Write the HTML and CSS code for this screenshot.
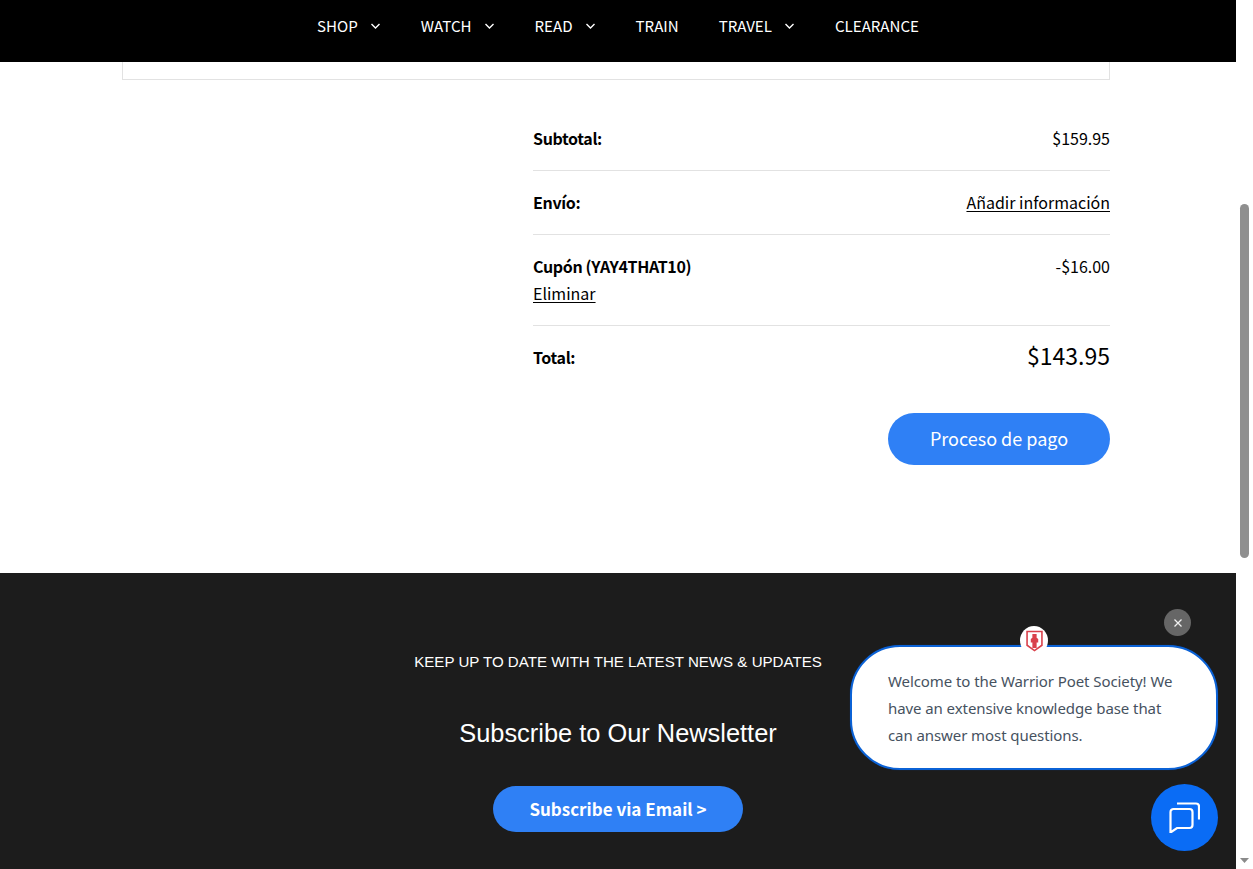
FILE: index.html
```html
<!DOCTYPE html>
<html lang="es">
<head>
<meta charset="utf-8">
<title>Carrito</title>
<link rel="stylesheet" href="styles.css">
</head>
<body>
<div class="viewport">
  <div class="page">
    <header class="topbar">
      <nav class="nav">
        <a class="nav-item">SHOP <svg class="chev" viewBox="0 0 10 6"><path d="M1 1l4 4 4-4"/></svg></a>
        <a class="nav-item">WATCH <svg class="chev" viewBox="0 0 10 6"><path d="M1 1l4 4 4-4"/></svg></a>
        <a class="nav-item">READ <svg class="chev" viewBox="0 0 10 6"><path d="M1 1l4 4 4-4"/></svg></a>
        <a class="nav-item">TRAIN</a>
        <a class="nav-item">TRAVEL <svg class="chev" viewBox="0 0 10 6"><path d="M1 1l4 4 4-4"/></svg></a>
        <a class="nav-item">CLEARANCE</a>
      </nav>
    </header>
    <main class="content">
      <div class="cart-box"></div>
      <section class="summary">
        <div class="row"><strong>Subtotal:</strong><span>$159.95</span></div>
        <div class="row"><strong>Envío:</strong><a class="link">Añadir información</a></div>
        <div class="row">
          <div class="coupon"><strong>Cupón (YAY4THAT10)</strong><a class="link">Eliminar</a></div>
          <span>-$16.00</span>
        </div>
        <div class="row row-total"><strong>Total:</strong><span class="total">$143.95</span></div>
        <div class="actions"><a class="checkout">Proceso de pago</a></div>
      </section>
    </main>
    <footer class="footer">
      <p class="kicker">KEEP UP TO DATE WITH THE LATEST NEWS &amp; UPDATES</p>
      <h2 class="news-title">Subscribe to Our Newsletter</h2>
      <a class="subscribe">Subscribe via Email &gt;</a>
    </footer>
  </div>
  <div class="scrollbar">
    <svg class="arrow" viewBox="0 0 17 17"><path d="M4 6h9l-4.500 5z" /></svg>
    <div class="thumb"></div>
    <svg class="arrow arrow-down" viewBox="0 0 17 17"><path d="M4 6h9l-4.500 5z" /></svg>
  </div>
  <button class="chat-close" aria-label="Cerrar">
    <svg viewBox="0 0 10 10"><path d="M1.500 1.500l7 7M8.500 1.500l-7 7"/></svg>
  </button>
  <div class="bubble">
    <span class="badge">
      <svg viewBox="0 0 16 20"><path class="shield" d="M1 1h14v13l-7 5-7-5z"/><path class="mark" d="M6 3.500h4V7l1.500 1v3.500H10v5H6v-5H4.500V8L6 7z"/></svg>
    </span>
    Welcome to the Warrior Poet Society! We have an extensive knowledge base that can answer most questions.
  </div>
  <button class="chat-launcher" aria-label="Chat">
    <svg viewBox="0 0 31 31"><path d="M1.500 10a3 3 0 0 1 3-3h16a3 3 0 0 1 3 3v13a3 3 0 0 1-3 3H8l-6.500 4.500z"/><path d="M8 1.500h19a3 3 0 0 1 3 3v13"/></svg>
  </button>
</div>
</body>
</html>
```
FILE: styles.css
```css
* { box-sizing: border-box; }
html, body { margin: 0; height: 100%; overflow: hidden; }
body {
  font-family: "Noto Sans CJK SC", "Noto Sans", sans-serif;
  font-size: 16px;
  line-height: 27px;
  color: #000;
  background: #fff;
}
.viewport { position: relative; display: flex; width: 1253px; height: 869px; overflow: hidden; }
.page { width: 1236px; flex: none; display: flex; flex-direction: column; }

.topbar { height: 62px; background: #000; flex: none; }
.nav { display: flex; justify-content: center; gap: 40px; padding: 12px 0 0 0; }
.nav-item { display: flex; align-items: center; gap: 12px; color: #fff; font-size: 15.100px; line-height: 27px; white-space: nowrap; }
.chev { width: 11px; height: 6px; fill: none; stroke: #fff; stroke-width: 1.400; }

.content { flex: 1; padding: 0 126px 0 122px; }
.cart-box { height: 18px; border: 1px solid #e2e2e2; border-top: 0; }
.summary { margin: 27px 0 0 411px; }
.row { display: flex; justify-content: space-between; align-items: flex-start; padding: 18px 0; border-bottom: 1px solid #e2e2e2; }
.row strong { font-weight: 700; letter-spacing: -0.350px; }
.coupon { display: flex; flex-direction: column; align-items: flex-start; }
.link { color: #000; text-decoration: underline; text-underline-offset: 2px; }
.row-total { border-bottom: 0; align-items: center; padding: 16px 0 14px; }
.total { font-size: 23px; line-height: 32px; margin-top: -3px; padding-bottom: 1px; }
.actions { display: flex; justify-content: flex-end; margin-top: 27px; }
.checkout { width: 222px; height: 52px; border-radius: 26px; background: #2f80f5; color: #fff; font-size: 18px; line-height: 50px; text-align: center; }

.footer { height: 296px; flex: none; background: #1c1c1c; color: #fff; text-align: center; padding-top: 79px; font-family: "Liberation Sans", Arial, sans-serif; }
.kicker { margin: 0; font-size: 15.100px; line-height: 20px; }
.news-title { margin: 45px 0 0; font-size: 25.400px; line-height: 32px; font-weight: 400; }
.subscribe { display: block; width: 250px; height: 46px; margin: 37px auto 0; border-radius: 23px; background: #2f80f5; color: #fff; font-family: "Noto Sans CJK SC", "Noto Sans", sans-serif; font-size: 17px; font-weight: 700; line-height: 46px; }

.scrollbar { width: 17px; flex: none; background: #fff; display: flex; flex-direction: column; align-items: center; }
.arrow { width: 17px; height: 17px; flex: none; fill: #fff; }
.arrow-down { fill: #8a8a8a; margin-top: auto; }
.thumb { width: 9px; height: 354px; margin-top: 187px; background: #8f8f8f; border-radius: 5px; }

.chat-close { position: absolute; left: 1164px; top: 609px; width: 27px; height: 27px; padding: 0; border: 0; border-radius: 50%; background: #666; display: flex; align-items: center; justify-content: center; }
.chat-close svg { width: 10px; height: 10px; fill: none; stroke: #f0f0f0; stroke-width: 1.300; }
.bubble { position: absolute; left: 850px; top: 645px; width: 368px; height: 125px; padding: 21px 36px 0; background: #fff; border: 2px solid #0b62d6; border-radius: 50px; box-shadow: 0 0 1px #0a3f8f; font-family: "Noto Sans", sans-serif; font-size: 15px; letter-spacing: -0.080px; line-height: 27px; color: #46525f; }
.badge { position: absolute; left: 168px; top: -21px; width: 28px; height: 29px; border-radius: 50%; background: #fff; display: flex; align-items: center; justify-content: center; }
.badge svg { width: 17px; height: 22px; }
.shield { fill: #fff; stroke: #d9414b; stroke-width: 1.500; }
.mark { fill: #d9414b; }
.chat-launcher { position: absolute; left: 1151px; top: 784px; width: 67px; height: 67px; padding: 0; border: 0; border-radius: 50%; background: #0a6cf5; display: flex; align-items: center; justify-content: center; }
.chat-launcher svg { width: 31px; height: 31px; fill: none; stroke: #fff; stroke-width: 2.200; }
```
